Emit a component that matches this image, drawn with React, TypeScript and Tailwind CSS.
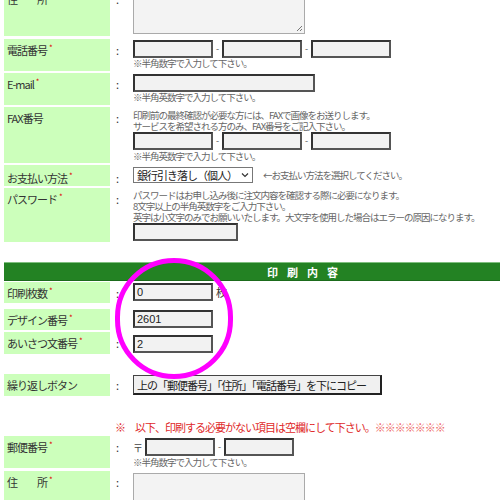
import React from "react";

const inp =
  "h-[18px] border-2 border-t-[#333] border-l-[#333] border-r-[#555] border-b-[#555] bg-[#f2f2f2] box-border";

function Row({
  label,
  req = true,
  h,
  mt = "",
  labelCls = "pt-[4px]",
  children,
}: {
  label: React.ReactNode;
  req?: boolean;
  h: string;
  mt?: string;
  labelCls?: string;
  children?: React.ReactNode;
}) {
  return (
    <div className={`flex shrink-0 ${h} ${mt}`}>
      <div
        className={`w-[106px] ml-[4px] bg-[#ccffbb] pl-[3px] ${labelCls} text-[11px] leading-[14px] tracking-[-1px] text-[#333] whitespace-nowrap`}
      >
        {label}
        {req && <sup className="text-[#e00000] text-[8px] ml-[2px]">*</sup>}
      </div>
      <div className={`w-[23px] pl-[6px] ${labelCls} text-[11px] leading-[14px] text-[#333]`}>:</div>
      <div className="flex-1 min-w-0">{children}</div>
    </div>
  );
}

function Note({ children }: { children: React.ReactNode }) {
  return (
    <div className="text-[9.5px] leading-[11px] tracking-[-1px] text-[#666] whitespace-nowrap">{children}</div>
  );
}

function Phone() {
  return (
    <div className="flex items-center">
      <div className={`${inp} w-[80px]`} />
      <span className="w-[9px] text-center text-[9px] text-[#555]">-</span>
      <div className={`${inp} w-[80px]`} />
      <span className="w-[9px] text-center text-[9px] text-[#555]">-</span>
      <div className={`${inp} w-[80px]`} />
    </div>
  );
}

function Area({ h }: { h: string }) {
  return (
    <div className={`relative w-[172px] ${h} border border-[#aaa] bg-[#f3f3f3]`}>
      <svg className="absolute right-[1px] bottom-[1px]" width="7" height="7" viewBox="0 0 7 7">
        <path d="M6 1 L1 6 M6 4 L4 6" stroke="#777" strokeWidth="1" />
      </svg>
    </div>
  );
}

function NumInput({ value }: { value: string }) {
  return (
    <div
      className={`${inp} w-[80px] flex items-center pl-[2px] text-[11px] font-['Liberation_Sans',sans-serif] text-[#222]`}
    >
      {value}
    </div>
  );
}

export default function App() {
  return (
    <div className="relative w-[500px] h-[500px] overflow-hidden bg-white font-['Noto_Sans_CJK_JP','Noto_Sans',sans-serif]">
      <div className="flex flex-col">
        <Row label="住　　所" h="h-[48px]" mt="-mt-[12px]">
          <div className="mt-[1px]">
            <Area h="h-[45px]" />
          </div>
        </Row>

        <Row label="電話番号" h="h-[32px]" mt="mt-[3px]">
          <div className="pt-[1px]">
            <Phone />
            <Note>※半角数字で入力して下さい。</Note>
          </div>
        </Row>

        <Row label="E-mail" h="h-[32px]" mt="mt-[2px]">
          <div className="pt-[1px]">
            <div className={`${inp} w-[182px]`} />
            <Note>※半角英数字で入力して下さい。</Note>
          </div>
        </Row>

        <Row label="FAX番号" req={false} h="h-[56px]" mt="mt-[2px]">
          <div className="pt-[3px]">
            <Note>印刷前の最終確認が必要な方には、FAXで画像をお送りします。</Note>
            <Note>サービスを希望される方のみ、FAX番号をご記入下さい。</Note>
            <Phone />
            <div className="mt-[1px]">
              <Note>※半角英数字で入力して下さい。</Note>
            </div>
          </div>
        </Row>

        <Row label="お支払い方法" h="h-[21px]" mt="mt-[2px]" labelCls="pt-[6px]">
          <div className="pt-[2px] flex items-center">
            <div className="w-[120px] h-[16px] border border-[#777] flex items-center justify-between px-[3px] text-[11px] leading-[14px] tracking-[-1px] text-[#222] bg-white">
              <span>銀行引き落し（個人）</span>
              <svg width="8" height="6" viewBox="0 0 8 6">
                <path d="M1 1.5 L4 4.5 L7 1.5" stroke="#333" strokeWidth="1.2" fill="none" />
              </svg>
            </div>
            <div className="ml-[10px]">
              <Note>←お支払い方法を選択してください。</Note>
            </div>
          </div>
        </Row>

        <Row label="パスワード" h="h-[54px]" mt="mt-[2px]">
          <div className="pt-[2px]">
            <Note>パスワードはお申し込み後に注文内容を確認する際に必要になります。</Note>
            <Note>8文字以上の半角英数字をご入力下さい。</Note>
            <Note>英字は小文字のみでお願いいたします。大文字を使用した場合はエラーの原因になります。</Note>
            <div className={`${inp} w-[105px]`} />
          </div>
        </Row>

        <div className="shrink-0 mt-[20px] ml-[4px] h-[19px] bg-[#238223] border-t border-t-[#7fbf7f] border-b border-b-[#1b6b1b] flex items-center pl-[263px]">
          <span className="text-white font-bold text-[11px] leading-[14px] tracking-[9px]">印刷内容</span>
        </div>

        <Row label="印刷枚数" h="h-[21px]" mt="mt-[1px]">
          <div className="pt-[1px] flex items-center">
            <NumInput value="0" />
            <span className="ml-[3px] text-[11px] text-[#333]">枚</span>
          </div>
        </Row>

        <Row label="デザイン番号" h="h-[21px]" mt="mt-[6px]">
          <div className="pt-[1px]">
            <NumInput value="2601" />
          </div>
        </Row>

        <Row label="あいさつ文番号" h="h-[22px]" mt="mt-[2px]">
          <div className="pt-[3px]">
            <NumInput value="2" />
          </div>
        </Row>

        <Row label="繰り返しボタン" req={false} h="h-[22px]" mt="mt-[20px]">
          <div className="pt-[1px]">
            <div className="w-[249px] h-[20px] border border-[#444] border-r-2 border-b-2 border-r-[#222] border-b-[#222] bg-[#f0f0f0] flex items-center pl-[3px] text-[11px] leading-[14px] tracking-[-1px] text-[#222] whitespace-nowrap">
              上の「郵便番号」「住所」「電話番号」を下にコピー
            </div>
          </div>
        </Row>

        <div className="shrink-0 h-[40px] pt-[24px] pl-[115px] text-[11px] leading-[14px] tracking-[-1px] text-[#e02a2a] whitespace-nowrap">
          ※　以下、印刷する必要がない項目は空欄にして下さい。<span className="text-[#ee6666]">※※※※※※※</span>
        </div>

        <Row label="郵便番号" h="h-[32px]">
          <div className="pt-[2px]">
            <div className="flex items-center">
              <span className="w-[12px] text-[10px] text-[#444]">〒</span>
              <div className={`${inp} w-[70px]`} />
              <span className="w-[9px] text-center text-[9px] text-[#555]">-</span>
              <div className={`${inp} w-[70px]`} />
            </div>
            <div className="mt-[1px]">
              <Note>※半角数字で入力して下さい。</Note>
            </div>
          </div>
        </Row>

        <Row label="住　　所" h="h-[60px]" mt="mt-[3px]">
          <div className="mt-[2px]">
            <Area h="h-[50px]" />
          </div>
        </Row>
      </div>

      <div className="absolute left-[115px] top-[258px] w-[118px] h-[121px] rounded-full border-[5px] border-[#ff00ff] pointer-events-none" />
    </div>
  );
}
